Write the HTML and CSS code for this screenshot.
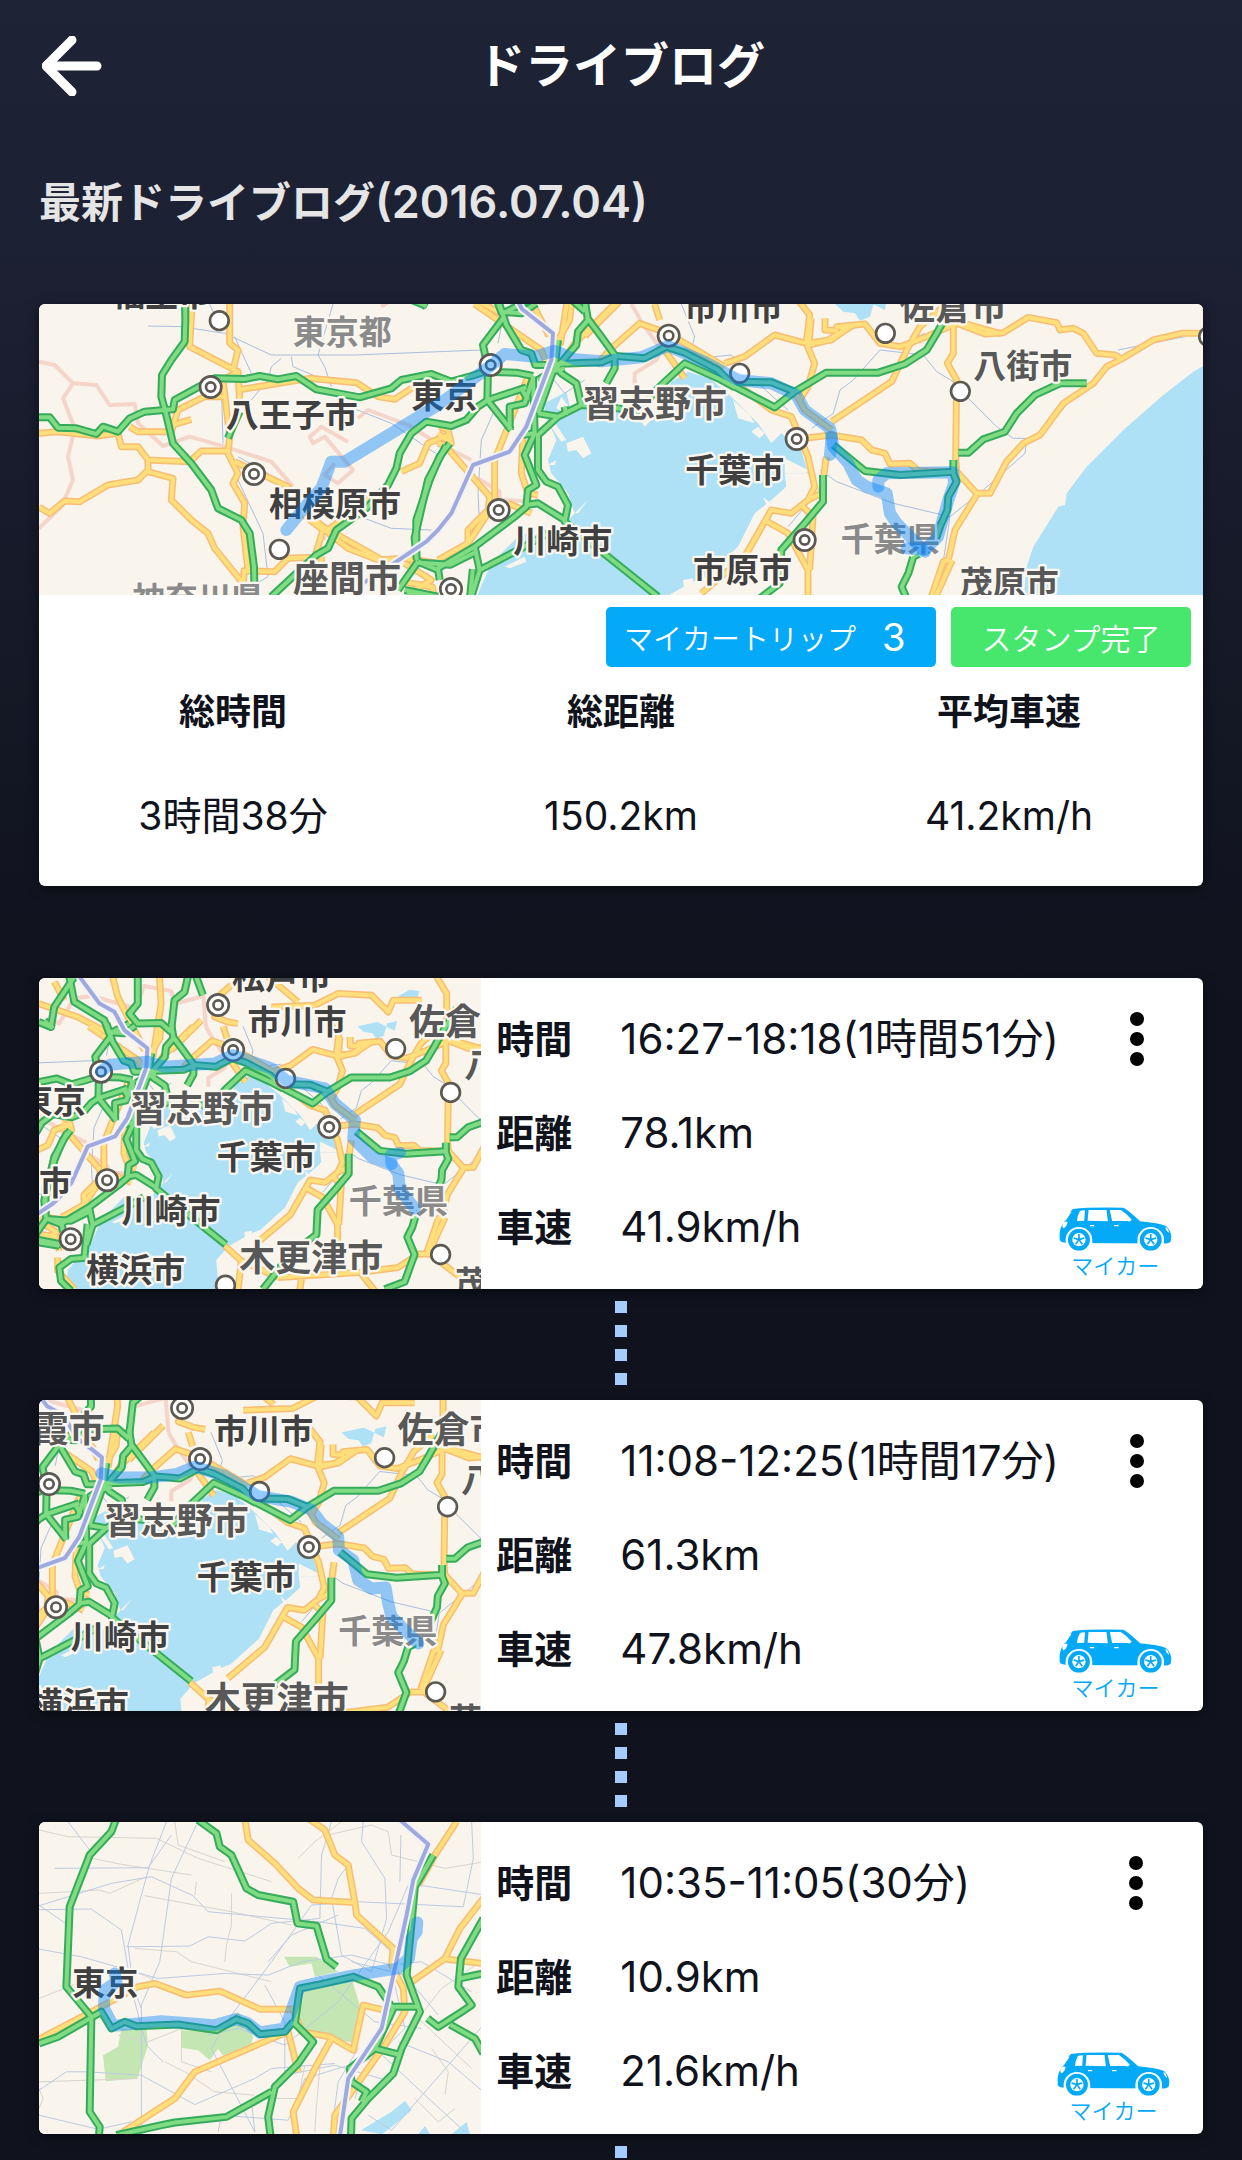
FILE: index.html
```html
<!DOCTYPE html>
<html lang="ja">
  <head>
    <meta charset="UTF-8" />
    <meta name="viewport" content="width=device-width, initial-scale=1.0" />
    <title>ドライブログ</title>
    <link rel="stylesheet" href="styles.css">
  </head>
  <body>
    <!-- shared drawings -->
    <svg class="sprites map" width="0" height="0" aria-hidden="true">
      <defs>
        <g id="town"><circle r="28" /></g>
        <g id="city"><circle r="32" /><circle r="14" /></g>

        <g id="bay-highways">
          <path d="M440 -60L442 60L440 125L400 180L372 225L370 290L385 345L405 430L460 490L520 570L540 625L610 660L635 700L648 800L650 900" />
          <path d="M3 352L35 352L60 383L115 385L175 402L195 380L240 395L275 355L320 335L405 328L410 300L480 262L530 235L620 237L665 228L720 238L775 228L835 268L965 292L1060 265L1090 240L1180 222L1240 245L1300 228L1340 215L1435 218L1485 228" />
          <path d="M570 415L580 390L605 335" />
          <path d="M1130 -10L1165 20" />
          <path d="M700 890L770 825L835 765L870 745L895 690L985 625L1050 555L1075 505L1085 460L1120 400L1165 365L1240 378L1285 360L1320 320L1350 300L1465 262" />
          <path d="M1235 430L1205 470L1175 540L1135 660L1135 765M1140 785L1200 810M1080 870L1140 785M1100 870L1200 890" />
          <path d="M1380 0L1405 75L1450 150L1480 160L1492 195L1560 195M1395 55L1335 135L1350 205L1348 300L1420 390M1390 35L1450 40L1495 10" />
          <path d="M1640 0L1650 60L1620 95L1615 135L1580 175L1550 210M1645 50L1690 110L1730 165L1730 205L1705 250" />
          <path d="M1550 192L1690 187L1735 168L1820 175L1885 140L1940 158L2040 210L2090 260L2210 322L2270 275L2365 218L2521 218L2601 192L2666 150L2696 100L2735 30L2790 -60" />
          <path d="M1740 325L1800 335L1860 265L1940 190L2040 235L2090 262M2100 245L2200 247L2270 275" />
          <path d="M1485 230L1490 400L1460 465L1495 555L1470 570L1465 620L1430 650L1310 740L1200 805L1205 840" />
          <path d="M1500 400L1500 510L1525 545L1560 560L1590 615L1580 665L1660 730L1760 810L1860 890M1465 615L1500 610L1580 660" />
          <path d="M1500 340L1560 350L1630 315L1615 250L1570 220L1550 195M1500 405L1560 350M1450 405L1490 400M1580 320L1585 345M1630 315L1740 325M1560 120L1550 200L1500 340" />
          <path d="M1485 235L1460 310L1415 320L1415 390M1310 740L1325 810L1450 745L1530 700M1325 810L1300 890M1450 265L1470 300M1500 240L1540 215L1580 205" />
          <path d="M2355 525L2355 605L2300 670L2230 750L2225 850L2120 930L2010 1070" />
          <path d="M2386 435L2481 513L2586 525L2746 515M2746 480L2746 520L2756 545L2731 590L2728 630L2706 680L2686 740L2626 770L2611 820L2591 860L2620 930L2580 1040L2500 1070" />
          <path d="M2761 458L2791 458L2836 418L2901 395L2936 340L2991 285L3066 250L3146 250" />
          <g transform="translate(1103 -214) scale(1.344)">
            <path d="M110 20L50 110L40 170L3 155M95 20L110 95L200 150L215 190M300 20L300 100L275 130L300 160L370 158L400 185M275 160L215 190" />
            <path d="M475 20L495 75M450 20L440 65L410 90L400 180M90 485L50 560L20 690L25 740M3 815L65 825M150 860L100 865L65 890L70 930L100 960" />
            <path d="M25 745L100 750L160 720M150 760L140 860" />
          </g>
        </g>

        <g id="bay-roads">
          <path d="M462 12L455 140L600 215L605 300M575 12L575 130L600 150L585 210M600 215L555 240L575 410L570 460L600 520L585 550L620 610L615 680L630 810" />
          <path d="M565 290L500 290L420 330L400 395L340 395L300 395L275 380M600 270L815 235L955 248L1020 290L1070 298L1120 265M405 375L460 358" />
          <path d="M3 400L60 395L180 408L240 400L250 440L300 440L330 480L455 485L490 453L570 453" />
          <path d="M330 480L330 510L300 540L210 555L125 605L80 603L35 640L3 622M330 515L405 535L400 600L460 660L510 700L530 745L615 850" />
          <path d="M615 880L618 812L710 815L750 775L830 772L855 690L790 640L750 560L590 485M850 770L850 890M860 690L930 745L1020 780L1100 775L1200 790M890 700L1050 790M790 630L870 690L1000 590M1090 515L1145 490L1170 430L1230 405M1100 790L1180 840L1130 870" />
          <path d="M1310 12L1380 60L1510 150L1530 200M1600 12L1595 60L1560 120L1530 190M1730 12L1610 130L1570 190" />
          <path d="M1200 780L1290 730L1350 640L1355 590L1220 435L1200 430M1290 730L1290 690L1360 620M1370 600L1370 480L1430 330L1470 230M1455 400L1450 520L1470 580L1500 585M1410 610L1480 640" />
          <path d="M1200 400L1240 430L1230 390L1205 380M1675 195L1720 145L1805 70L1890 100L2060 200M1880 150L1940 235M1850 12L1865 60" />
          <path d="M2060 190L2120 170L2210 105L2305 130L2380 120L2430 85L2396 80L2481 72L2526 130L2586 140L2666 110L2756 70L2841 102L2896 98L2971 52L3056 68L3066 90L3106 85L3136 100L3176 160L3231 165L3251 177" />
          <path d="M2305 130L2315 45L2280 0M2305 130L2330 190L2310 260L2285 300M2100 255L2200 330L2260 350L2310 470L2330 560L2310 600L2260 640L2200 630L2120 770L1990 880" />
          <path d="M2180 660L2250 700L2310 810L2310 920M2300 415L2380 405L2471 420L2501 450L2541 460L2556 492L2616 490L2641 512L2756 515L2816 580L2856 580L2906 485L2956 430L3006 405L3076 310L3166 250L3206 200L3251 177L3346 120L3431 100L3500 100" />
          <path d="M2295 620L2325 650L2315 810M2365 470L2350 580L2310 600M2746 60L2746 160L2728 190L2756 240L2753 480L2756 515M2816 585L2751 690L2731 780L2716 785L2670 920M2381 365L2561 245L2606 150L2646 80L2716 20M2361 55L2361 90L2400 92M2270 275L2300 330L2381 390" />
          <g transform="translate(1103 -214) scale(1.344)">
            <path d="M50 35L80 90M3 100L120 140L215 190M365 20L370 100L345 260M225 20L240 80L320 240M580 45L545 75L530 140L570 155L600 160M490 150L400 240" />
            <path d="M700 110L830 105L900 70L1000 75L1050 125L1065 90L1150 90M690 20L780 95M1195 20L1225 70L1225 200M560 825L610 870L600 960" />
            <path d="M720 920L960 905L1080 890L1140 850L1175 850L1280 930M970 910L1010 960M790 925L785 960M65 840L60 800L3 790M60 860L60 900L110 955M610 870L720 920M1220 740L1170 850M1329 235L1225 205M905 200L900 260L940 250L1000 215" />
          </g>
        </g>

        <g id="bay-area">
          <g class="water">
            <path d="M1520 310L1585 275L1600 340L1630 325L1740 330L1800 350L1820 380L1850 350L1900 245L1950 215L2015 235L2080 290L2120 330L2160 370L2200 430L2230 400L2290 450L2310 520L2240 520L2245 560L2200 600L2150 640L2100 740L2000 830L1964 845L1870 898L1822 952L1829 1033L1816 1080L1218 1080L1224 992L1318 885L1360 790L1450 700L1540 720L1610 640L1590 580L1540 520L1530 480L1555 420L1520 340Z" />
            <path d="M3510 190L3466 215L3376 285L3256 390L3146 500L3086 580L3081 615L3061 620L2986 740L2966 800L2956 900L3510 900Z" />
            <path d="M2391 12L2416 35L2451 40L2466 62L2496 50L2510 0L2550 -10L2540 30L2470 -5Z" />
            <path d="M2555 -110L2600 -135L2640 -130L2630 -100L2570 -95Z" />
          </g>
          <g class="land">
            <path d="M1585 430L1635 410L1660 460L1635 475L1615 450L1590 455ZM1545 360L1585 420L1570 425L1535 375ZM1570 290L1600 330L1590 345L1555 325Z" />
            <path d="M2085 300L2100 355L2150 370L2135 345ZM2160 380L2180 400L2165 415L2140 395ZM2240 475L2310 510L2305 520L2240 520ZM2255 535L2310 550L2260 558ZM2240 560L2280 590L2250 598ZM2175 590L2210 620L2190 625ZM1935 840L1965 835L1965 860L1940 885Z" />
            <path d="M1610 640L1650 600L1620 640ZM1400 800L1460 770L1465 785L1415 805ZM1350 760L1365 720L1380 750ZM1530 495L1555 480L1550 495Z" />
          </g>
          <g class="rail">
            <path d="M330 78L430 80L560 100L700 165L950 165L1330 150M885 12L840 165L860 200L880 260M590 110L640 220M600 540L675 700L690 830L640 860M980 655L1060 685L1180 690M515 12L545 80M550 250L555 430M600 310L640 300L690 240L700 200L730 175M600 470L760 560M760 170L765 200L860 240M920 315L1060 370L1200 465" />
            <path d="M1420 12L1390 80L1380 130M1930 12L1970 110L1960 150M1370 330L1330 420L1320 580L1325 680M2030 170L2080 165L2120 200M1960 200L2160 250L2250 330M1540 230L1580 280L1640 240M2250 680L2310 610" />
            <path d="M2786 290L2876 380L2926 415L2966 415L2961 460L2836 570L2736 650L2566 610L2396 545L2346 510M2321 385L2386 340L2406 270L2446 240L2526 150L2656 165L2696 215L2746 245M3090 310L3000 410M3240 150L3440 110M2736 650L2700 890M2660 100L2560 145" />
          </g>
          <g class="border">
            <path d="M3 185L50 195L105 250L175 255L215 315L290 312L300 370L375 438L455 410L560 440L700 485L765 560M105 250L75 295L110 385L90 470L105 540L70 620L3 685M960 355L990 330L1110 375L1200 430L1300 480M930 425L850 380L815 410L825 430L860 410L945 510L900 550L860 525L890 490M830 640L860 720M1030 20L1060 0" />
            <path d="M1780 12L1810 65L1870 150L1855 180L1790 220L1790 255M1320 535L1385 575L1385 600L1500 605L1580 650" />
            <path d="M1140 -20L1190 0L1250 -100L1320 -110L1500 -60L1530 -150L1640 -130L1660 -80L1770 -110L1780 12" />
          </g>
          <use href="#bay-roads" class="road-edge" /><use href="#bay-roads" class="road" />
          <use href="#bay-highways" class="highway-edge" /><use href="#bay-highways" class="highway" />
          <path class="train-edge" d="M1270 -190L1352 -80L1412 -47L1452 27L1545 100L1540 180L1465 380L1415 455L1305 495L1240 640L1200 690L1165 725L1060 795L960 860" />
          <path class="train" d="M1270 -190L1352 -80L1412 -47L1452 27L1545 100L1540 180L1465 380L1415 455L1305 495L1240 640L1200 690L1165 725L1060 795L960 860" />
        </g>

        <symbol id="car" viewBox="0 0 340 132">
          <path fill="#04a9f8" d="M34 14L42 6Q90 0 194 2Q212 12 244 43Q300 48 322 57Q336 70 338 88L336 104Q330 110 314 110L24 108Q4 106 2 98L2 78Q6 50 22 38L38 14Z" />
          <path fill="#fff" d="M63 12Q70 9 78 10L76 41L54 42Q55 26 63 12ZM89 9L143 9L147 43L86 41ZM153 9L186 9Q204 20 219 38Q214 46 206 42L160 42Q156 26 153 9ZM11 49Q18 41 26 45Q24 58 14 64Q8 60 11 49ZM322 60Q331 66 332 78Q322 72 320 62Z" />
          <path stroke="#fff" stroke-width="4" d="M93 56H106M166 56H179" />
          <path fill="#fff" d="M20 132V98A40 38 0 0 1 100 98V132ZM236 132V98A40 38 0 0 1 316 98V132Z" />
          <g fill="#04a9f8">
            <circle cx="60" cy="98" r="33" /><circle cx="276" cy="98" r="33" />
          </g>
          <g fill="#fff">
            <circle cx="60" cy="98" r="20" /><circle cx="276" cy="98" r="20" />
          </g>
          <g stroke="#04a9f8" stroke-width="5">
            <path d="M60 98V81M60 98L44 93M60 98L76 93M60 98L50 112M60 98L70 112M276 98V81M276 98L260 93M276 98L292 93M276 98L266 112M276 98L286 112" />
          </g>
        </symbol>
      </defs>
    </svg>

    <header class="topbar">
      <a class="back" href="#" aria-label="戻る">
        <svg viewBox="0 0 60 60"><path d="M30 4L4 30L30 56M5 30H55" /></svg>
      </a>
      <h1>ドライブログ</h1>
    </header>

    <main>
      <h2>最新ドライブログ<span>(2016.07.04)</span></h2>

      <section class="card summary">
        <svg class="map" viewBox="3 12 3492 873" preserveAspectRatio="xMidYMid slice">
          <use href="#bay-area" />
          <g class="pins">
            <use href="#town" x="544" y="62" /><use href="#town" x="724" y="748" />
            <use href="#town" x="2105" y="220" /><use href="#town" x="2542" y="100" />
            <use href="#town" x="2767" y="274" /><use href="#town" x="3512" y="110" />
            <use href="#city" x="518" y="261" /><use href="#city" x="648" y="522" />
            <use href="#city" x="1358" y="195" /><use href="#city" x="1892" y="107" />
            <use href="#city" x="2276" y="417" /><use href="#city" x="1382" y="630" />
            <use href="#city" x="1239" y="867" /><use href="#city" x="2300" y="720" />
          </g>
          <g class="labels">
            <text x="222" y="17">福生市</text>
            <text x="563" y="382">八王子市</text>
            <text x="693" y="649">相模原市</text>
            <text x="1120" y="323">東京</text>
            <text x="1938" y="60">市川市</text>
            <text x="1942" y="545">千葉市</text>
            <text x="1426" y="758">川崎市</text>
            <text x="1965" y="847">市原市</text>
            <text class="mid" x="2806" y="234">八街市</text>
            <text class="mid" x="2765" y="885">茂原市</text>
            <text class="mid big" x="765" y="877">座間市</text>
            <text class="mid big" x="1635" y="350">習志野市</text>
            <text class="mid big" x="2583" y="60">佐倉市</text>
            <text class="pref" x="764" y="132">東京都</text>
            <text class="pref" x="2408" y="752">千葉県</text>
            <text class="pref" x="282" y="932">神奈川県</text>
          </g>
          <g class="route">
            <path d="M745 690L810 610L850 565L880 485L920 485L1200 315L1355 200L1400 162L1490 170L1550 152L1610 178L1690 184L1810 172L1890 138L2000 185L2100 240L2200 250L2275 285L2300 330L2376 385L2381 410L2386 440L2431 490L2456 540L2486 560L2546 580L2556 640L2576 670L2616 710L2661 755" />
            <path d="M2381 410L2376 465M2521 560L2521 540L2546 520L2646 518L2746 517L2748 550L2731 600L2700 710L2660 750L2606 745" />
          </g>
        </svg>
        <div class="tags">
          <span class="tag trips">マイカートリップ <b>3</b></span>
          <span class="tag stamp">スタンプ完了</span>
        </div>
        <dl class="totals">
          <div><dt>総時間</dt><dd>3時間38分</dd></div>
          <div><dt>総距離</dt><dd>150.2km</dd></div>
          <div><dt>平均車速</dt><dd>41.2km/h</dd></div>
        </dl>
      </section>

      <article class="card trip">
        <svg class="map" viewBox="3 24 1326 933" preserveAspectRatio="xMidYMid slice">
          <use href="#bay-area" transform="translate(-823 160) scale(.745)" />
          <g class="pins">
            <use href="#city" x="540" y="105" /><use href="#city" x="585" y="240" />
            <use href="#city" x="189" y="305" /><use href="#city" x="873" y="471" />
            <use href="#city" x="207" y="630" /><use href="#city" x="98" y="807" />
            <use href="#town" x="1072" y="236" /><use href="#town" x="742" y="325" />
            <use href="#town" x="1237" y="367" /><use href="#town" x="1207" y="853" />
            <use href="#town" x="562" y="945" />
          </g>
          <g class="labels">
            <text x="582" y="58">松戸市</text>
            <text x="628" y="193">市川市</text>
            <text x="-55" y="430">東京</text>
            <text x="536" y="598">千葉市</text>
            <text x="3" y="675">市</text>
            <text x="250" y="758">川崎市</text>
            <text x="144" y="934">横浜市</text>
            <text class="mid big" x="278" y="455">習志野市</text>
            <text class="mid big" x="603" y="903">木更津市</text>
            <text class="mid big" x="1112" y="195">佐倉</text>
            <text class="mid" x="1278" y="322">八街市</text>
            <text class="mid" x="1250" y="973">茂原市</text>
            <text class="pref" x="932" y="730">千葉県</text>
          </g>
          <g class="route">
            <path d="M190 303L215 284L260 280L330 275L380 290L530 280L585 255L700 295L745 332L860 355L890 400L950 450L945 505L1000 560L1060 582L1080 610L1085 660L1130 715" />
            <path d="M1060 582L1058 555L1085 548" />
          </g>
        </svg>
        <dl>
          <div><dt>時間</dt><dd>16:27-18:18(1時間51分)</dd></div>
          <div><dt>距離</dt><dd>78.1km</dd></div>
          <div><dt>車速</dt><dd>41.9km/h</dd></div>
        </dl>
        <div class="side">
          <button class="more" aria-label="メニュー"><i></i><i></i><i></i></button>
          <div class="mycar"><svg><use href="#car" /></svg>マイカー</div>
        </div>
      </article>

      <div class="link"><i></i><i></i><i></i><i></i></div>

      <article class="card trip">
        <svg class="map" viewBox="3 30 1326 933" preserveAspectRatio="xMidYMid slice">
          <use href="#bay-area" transform="translate(-1120 117) scale(.849)" />
          <g class="pins">
            <use href="#city" x="432" y="54" /><use href="#city" x="486" y="207" />
            <use href="#city" x="33" y="282" /><use href="#city" x="812" y="471" />
            <use href="#city" x="54" y="651" /><use href="#town" x="1039" y="203" />
            <use href="#town" x="664" y="304" /><use href="#town" x="1228" y="350" />
            <use href="#town" x="1192" y="905" />
          </g>
          <g class="labels">
            <text x="528" y="159">市川市</text>
            <text x="476" y="596">千葉市</text>
            <text x="98" y="777">川崎市</text>
            <text x="-25" y="978">横浜市</text>
            <text class="mid big" x="-16" y="157">霞市</text>
            <text class="mid big" x="200" y="432">習志野市</text>
            <text class="mid big" x="500" y="968">木更津市</text>
            <text class="mid big" x="1078" y="160">佐倉市</text>
            <text class="mid" x="1268" y="305">八街市</text>
            <text class="mid" x="1232" y="1025">茂原市</text>
            <text class="pref" x="900" y="758">千葉県</text>
          </g>
          <g class="route">
            <path d="M190 250L240 262L340 262L415 252L470 230L560 258L660 318L760 335L820 360L850 400L900 440L902 480L945 510L960 570L1000 595L1042 592L1050 640L1060 680L1140 760" />
          </g>
        </svg>
        <dl>
          <div><dt>時間</dt><dd>11:08-12:25(1時間17分)</dd></div>
          <div><dt>距離</dt><dd>61.3km</dd></div>
          <div><dt>車速</dt><dd>47.8km/h</dd></div>
        </dl>
        <div class="side">
          <button class="more" aria-label="メニュー"><i></i><i></i><i></i></button>
          <div class="mycar"><svg><use href="#car" /></svg>マイカー</div>
        </div>
      </article>

      <div class="link"><i></i><i></i><i></i><i></i></div>

      <article class="card trip">
        <svg class="map" viewBox="3 21 1326 933" preserveAspectRatio="xMidYMid slice">
          <defs>
            <g id="tokyo-roads">
              <path d="M620 10L630 75L710 145L780 220L825 255L950 262L955 300L1065 400L1060 450L1095 520L1100 590L1040 690L940 830L890 900L885 970M810 10L860 45L890 120L930 150L950 262M1255 20L1190 120L1140 210" />
              <path d="M1335 250L1265 340L1220 430L1120 500M1220 432L1335 445M3 672L160 590L300 515L350 505L445 540L545 528L665 582L765 582L790 650L875 665L945 705L975 570L1060 590M240 960L410 850L470 770L690 675L750 650L780 770M880 670L830 760L765 890L775 960" />
            </g>
            <g id="tokyo-highways">
              <path d="M235 10L220 50L155 120L95 275L85 515L160 605L155 890L185 935L182 970M3 685L60 665L190 590L220 640L260 620L295 633L420 628L535 645L595 612L630 625L665 657L740 650L765 620" />
              <path d="M480 15L535 55L545 95L580 120L625 220L660 240L765 260L778 325L835 332L865 432L895 455" />
              <path d="M235 960L370 930L410 922L565 905L700 830M698 970L690 905L710 815L780 745L825 680L770 625L785 520L845 508L945 485L1020 515L1060 575L1145 575M1185 120L1130 215L1105 480L1145 590L1090 700L1065 775L990 850L940 910L938 970" />
              <path d="M1065 580L1010 700L935 760L940 800L985 830L970 860M1010 700L1080 718M1335 310L1268 430L1260 515L1300 570L1270 590L1200 635L1168 610M1265 490L1335 475M1235 628L1310 670L1335 715" />
            </g>
          </defs>
          <g class="park">
            <path d="M738 425L835 425L900 470L830 485L820 445L755 455ZM250 640L325 640L330 690L298 790L203 798L195 720L240 695ZM430 645L520 650L600 590L645 665L640 685L555 722L540 700L515 735L480 705L430 698ZM800 520L940 490L965 570L940 682L825 662L780 620Z" />
          </g>
          <g class="water">
            <path d="M968 945L1060 890L1100 857L1120 885L1060 935L1030 957ZM1140 957L1160 932L1175 957ZM1240 957L1285 920L1295 957Z" />
          </g>
          <g class="street">
            <path d="M3 45L90 65L355 70L480 130L700 200M140 125L250 148L460 180M3 235L185 225L215 235L325 185M320 242L580 290L760 330M410 20L420 90L560 140M475 200L470 240M3 550L180 480L290 470L340 490M290 400L415 410L460 440L700 500M3 800L300 790M380 740L440 770L530 830L650 840M580 235L580 330L565 390L560 440M240 660L330 680L430 640L430 740L520 770M870 60L1000 30L1050 50L1060 120L1220 160L1340 140M910 20L830 80L780 130" />
            <path d="M1340 430L1210 520L1140 610L1300 760M1180 700L1230 770L1220 840M1130 850L1200 920L1250 880M850 700L835 870L830 950M800 750L780 850L650 850M3 820L15 850L3 880" />
          </g>
          <g class="rail-wide">
            <path d="M90 20L155 105L105 240L90 330L3 270M385 20L335 150L310 240L270 390L290 560L325 690L375 740M475 30L400 190L365 440L310 570L310 950M3 284L160 282L250 345L275 490L310 580M3 402L130 425L360 490L560 475L690 480L790 440L940 420L1060 450L1150 440L1300 530" />
            <path d="M50 160L330 158L400 60M3 272L220 205L340 185L465 242L510 290L840 320L980 340L1070 420M265 395L455 393L510 365L620 378L700 325L845 310L850 120L880 20M3 825L85 770L150 770L310 780L470 868L650 790L700 760L890 745M3 900L180 942L280 920" />
            <path d="M975 20L970 80L1040 190L1045 310L1000 470L910 420L880 250L900 190L930 150M1300 20L1305 130L1275 275L960 260L820 270L700 440L580 600L520 700L650 950M1088 60L1085 200M1110 210L1050 350L900 560L740 690L600 640L510 660M1340 240L1140 210L1060 470L1100 640L980 760L950 850M680 510L740 620L740 780L890 750L1060 800M1200 600L1100 480L940 440" />
            <path d="M1335 630L1060 945L990 900M1080 680L1230 740L1335 830M1000 690L1160 840L1280 950M840 480L1010 620L1150 640M540 950L550 900L750 915L800 790L1000 730M880 950L900 800L960 700M690 440L760 360L900 300M650 950L640 860" />
          </g>
          <use href="#tokyo-roads" class="road-edge" /><use href="#tokyo-roads" class="road" />
          <use href="#tokyo-highways" class="highway-edge" /><use href="#tokyo-highways" class="highway" />
          <path class="train-edge" d="M1085 15L1170 88L1125 195L1105 300L1030 640L930 790L905 965" />
          <path class="train" d="M1085 15L1170 88L1125 195L1105 300L1030 640L930 790L905 965" />
          <g class="labels"><text x="103" y="541">東京</text></g>
          <g class="route">
            <path d="M230 475L235 500L200 525L198 580L225 632L300 625L370 618L530 630L595 612L630 625L665 652L740 640L755 600L785 515L850 500L950 480L1080 460L1112 430L1120 370L1135 350L1137 322" />
          </g>
        </svg>
        <dl>
          <div><dt>時間</dt><dd>10:35-11:05(30分)</dd></div>
          <div><dt>距離</dt><dd>10.9km</dd></div>
          <div><dt>車速</dt><dd>21.6km/h</dd></div>
        </dl>
        <div class="side">
          <button class="more" aria-label="メニュー"><i></i><i></i><i></i></button>
          <div class="mycar"><svg><use href="#car" /></svg>マイカー</div>
        </div>
      </article>

      <div class="link"><i></i><i></i><i></i><i></i></div>
    </main>
  </body>
</html>
```
FILE: styles.css
```css
* {
  box-sizing: border-box;
}
html {
  background-color: #10131e;
}
body {
  margin: 0;
  height: 100vh;
  overflow: hidden;
  background: linear-gradient(#1e2336 0, #1c2033 260px, #141724 720px, #10131e 1000px);
  color: #10131c;
  font-family: Inter, "Noto Sans CJK JP", sans-serif;
}
h1, h2, dl, dd {
  margin: 0;
}
.sprites {
  position: absolute;
}

.topbar {
  display: grid;
  grid-template-columns: 60px 1fr 60px;
  align-items: center;
  height: 132px;
  padding: 0 42px;
  color: #fff;
}
.back svg {
  display: block;
  width: 60px;
  height: 60px;
  fill: none;
  stroke: #fff;
  stroke-width: 9;
  stroke-linecap: round;
  stroke-linejoin: round;
}
h1 {
  text-align: center;
  font-size: 48px;
  font-weight: 600;
  line-height: 60px;
}

main {
  padding: 0 39px;
}
h2 {
  padding: 41px 0 71px;
  color: #e5e5e5;
  font-size: 42px;
  font-weight: 600;
  line-height: 60px;
}
h2 span {
  font-size: 45px;
  line-height: 1;
}

.card {
  overflow: hidden;
  border-radius: 6px;
  background-color: #fff;
  box-shadow: 0 3px 12px rgba(0, 0, 0, 0.5);
}

/* summary */
.summary {
  margin-bottom: 92px;
}
.summary .map {
  width: 100%;
}
.tags {
  display: flex;
  justify-content: flex-end;
  gap: 15px;
  padding: 12px 12px 0;
}
.tag {
  display: flex;
  justify-content: center;
  align-items: center;
  height: 60px;
  border-radius: 5px;
  color: #fff;
  font-size: 30px;
  font-weight: 350;
}
.trips {
  justify-content: flex-start;
  gap: 26px;
  width: 330px;
  padding-left: 18px;
  background-color: #04a9f8;
  font-size: 29px;
}
.trips b {
  font-size: 38px;
  font-weight: 400;
}
.stamp {
  width: 240px;
  background-color: #47e66d;
}
.totals {
  display: grid;
  grid-template-columns: repeat(3, 1fr);
  padding: 19px 0 44px;
  text-align: center;
  font-size: 36px;
  line-height: 52px;
}
.totals dt {
  margin-bottom: 52px;
  font-weight: 700;
}
.totals dd {
  font-size: 39px;
}
dd {
  font-weight: 400;
}

/* trips */
.trip {
  display: flex;
}
.trip .map {
  flex: none;
  width: 38%;
}
.trip dl {
  flex: 1;
  padding: 14px 0 14px 15px;
  font-size: 42px;
  line-height: 94px;
  white-space: nowrap;
}
.trip dl div {
  display: flex;
}
.trip dt {
  width: 124px;
  font-size: 38px;
  font-weight: 700;
}
.side {
  display: flex;
  flex-direction: column;
  justify-content: space-between;
  align-items: center;
  padding: 34px 33px 8px 0;
}
.more {
  display: flex;
  flex-direction: column;
  align-items: center;
  gap: 6px;
  width: 40px;
  margin-left: 44px;
  padding: 0;
  border: 0;
  background: none;
  cursor: pointer;
}
.more i {
  width: 14px;
  height: 14px;
  border-radius: 50%;
  background-color: #000;
}
.mycar {
  color: #04a9f8;
  text-align: center;
  font-size: 22px;
  font-weight: 350;
  line-height: 30px;
}
.mycar svg {
  display: block;
  width: 113px;
  height: 44px;
}
.link {
  display: flex;
  flex-direction: column;
  align-items: center;
  gap: 12px;
  padding: 12px 0 15px;
}
.link i {
  width: 12px;
  height: 12px;
  background-color: #a5ccff;
}

/* maps */
.map {
  display: block;
  background-color: #f9f4ec;
  fill: none;
  stroke-linejoin: round;
}
.map path {
  vector-effect: non-scaling-stroke;
}
#car path {
  vector-effect: none;
}
.water {
  fill: #aee1f6;
}
.land {
  fill: #f9f4ec;
}
.park {
  fill: #c3e6b2;
}
.street {
  stroke: #d6d5ce;
  stroke-width: 1px;
}
.rail {
  stroke: #a9bfdf;
  stroke-width: 1px;
}
.rail-wide {
  stroke: #bccbe2;
  stroke-width: 1px;
}
.border {
  stroke: #f2b9ad;
  stroke-opacity: 0.55;
  stroke-width: 4px;
}
.road-edge {
  stroke: #f8bd72;
  stroke-width: 7px;
}
.road {
  stroke: #ffdf7b;
  stroke-width: 4px;
}
.highway-edge {
  stroke: #35ab5b;
  stroke-width: 8px;
}
.highway {
  stroke: #7fdc83;
  stroke-width: 4px;
}
.train-edge {
  stroke: #f4f2f4;
  stroke-width: 8px;
}
.train {
  stroke: #9ea9df;
  stroke-width: 4px;
}
.pins,
#town,
#city {
  fill: #fff;
  stroke: #5c5952;
  stroke-width: 8px;
}
.labels {
  fill: #404040;
  stroke: #faf6f0;
  stroke-width: 14px;
  paint-order: stroke;
  font-family: "Noto Sans CJK JP", sans-serif;
  font-size: 99px;
  font-weight: 700;
}
.labels .mid {
  fill: #585858;
}
.labels .big {
  font-size: 108px;
}
.labels .pref {
  fill: #8a8a8a;
}
.route {
  stroke: #0084ff;
  stroke-opacity: 0.42;
  stroke-width: 12px;
  stroke-linecap: round;
}
```
